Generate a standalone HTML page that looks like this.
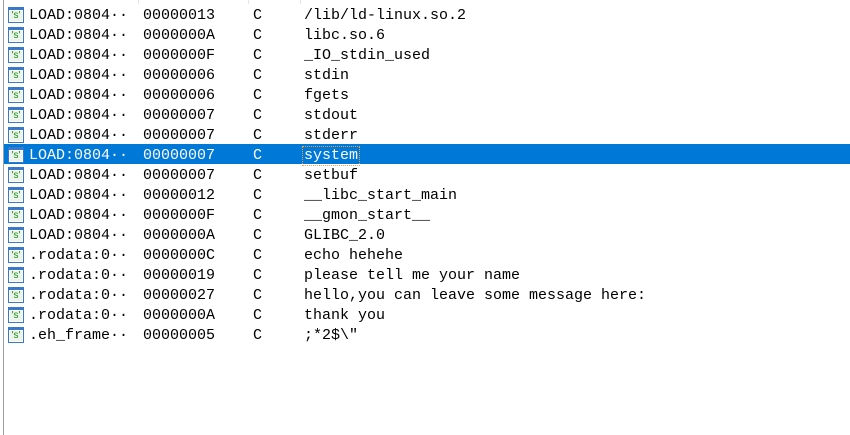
<!DOCTYPE html>
<html><head><style>
body{margin:0;width:850px;height:435px;background:#fff;overflow:hidden;position:relative;font-family:"Liberation Mono","Noto Sans CJK SC",monospace;font-size:15px;color:#000}
.lb{position:absolute;left:3px;top:0;width:1px;height:435px;background:#a0a0a0}
.sep{position:absolute;top:0;width:1px;height:4px;background:#e5e5e5}
.r{position:absolute;left:4px;width:846px;height:20px;line-height:20px}
.r span{position:absolute;top:2px;white-space:pre}
.sel{background:#0078d7;color:#fff}
.ic{position:absolute;left:4px;top:3px;width:14px;height:14px;border:1px solid #3a78c9;background:#fff}
.ic:before{content:"";position:absolute;left:0;top:0;right:0;height:2px;background:#3a78c9}
.ic i{position:absolute;left:1px;top:3px;width:12px;height:10px;background:#eaf4ea;color:#1f8a1f;font-style:normal;font-size:10px;line-height:10px;text-align:center;font-family:"Liberation Sans",sans-serif}
.f{outline:1px dotted #f0a040;outline-offset:-1px}
</style></head><body>
<div class="lb"></div>
<div class="sep" style="left:138px"></div><div class="sep" style="left:248px"></div><div class="sep" style="left:300px"></div>
<div class="r" style="top:4px"><div class="ic"><i>'s'</i></div><span style="left:25px">LOAD:0804··</span><span style="left:139px">00000013</span><span style="left:249px">C</span><span style="left:300px">/lib/ld-linux.so.2</span></div>
<div class="r" style="top:24px"><div class="ic"><i>'s'</i></div><span style="left:25px">LOAD:0804··</span><span style="left:139px">0000000A</span><span style="left:249px">C</span><span style="left:300px">libc.so.6</span></div>
<div class="r" style="top:44px"><div class="ic"><i>'s'</i></div><span style="left:25px">LOAD:0804··</span><span style="left:139px">0000000F</span><span style="left:249px">C</span><span style="left:300px">_IO_stdin_used</span></div>
<div class="r" style="top:64px"><div class="ic"><i>'s'</i></div><span style="left:25px">LOAD:0804··</span><span style="left:139px">00000006</span><span style="left:249px">C</span><span style="left:300px">stdin</span></div>
<div class="r" style="top:84px"><div class="ic"><i>'s'</i></div><span style="left:25px">LOAD:0804··</span><span style="left:139px">00000006</span><span style="left:249px">C</span><span style="left:300px">fgets</span></div>
<div class="r" style="top:104px"><div class="ic"><i>'s'</i></div><span style="left:25px">LOAD:0804··</span><span style="left:139px">00000007</span><span style="left:249px">C</span><span style="left:300px">stdout</span></div>
<div class="r" style="top:124px"><div class="ic"><i>'s'</i></div><span style="left:25px">LOAD:0804··</span><span style="left:139px">00000007</span><span style="left:249px">C</span><span style="left:300px">stderr</span></div>
<div class="r sel" style="top:144px"><div class="ic"><i>'s'</i></div><span style="left:25px">LOAD:0804··</span><span style="left:139px">00000007</span><span style="left:249px">C</span><span class="f" style="left:298px;padding:0 2px">system</span></div>
<div class="r" style="top:164px"><div class="ic"><i>'s'</i></div><span style="left:25px">LOAD:0804··</span><span style="left:139px">00000007</span><span style="left:249px">C</span><span style="left:300px">setbuf</span></div>
<div class="r" style="top:184px"><div class="ic"><i>'s'</i></div><span style="left:25px">LOAD:0804··</span><span style="left:139px">00000012</span><span style="left:249px">C</span><span style="left:300px">__libc_start_main</span></div>
<div class="r" style="top:204px"><div class="ic"><i>'s'</i></div><span style="left:25px">LOAD:0804··</span><span style="left:139px">0000000F</span><span style="left:249px">C</span><span style="left:300px">__gmon_start__</span></div>
<div class="r" style="top:224px"><div class="ic"><i>'s'</i></div><span style="left:25px">LOAD:0804··</span><span style="left:139px">0000000A</span><span style="left:249px">C</span><span style="left:300px">GLIBC_2.0</span></div>
<div class="r" style="top:244px"><div class="ic"><i>'s'</i></div><span style="left:25px">.rodata:0··</span><span style="left:139px">0000000C</span><span style="left:249px">C</span><span style="left:300px">echo hehehe</span></div>
<div class="r" style="top:264px"><div class="ic"><i>'s'</i></div><span style="left:25px">.rodata:0··</span><span style="left:139px">00000019</span><span style="left:249px">C</span><span style="left:300px">please tell me your name</span></div>
<div class="r" style="top:284px"><div class="ic"><i>'s'</i></div><span style="left:25px">.rodata:0··</span><span style="left:139px">00000027</span><span style="left:249px">C</span><span style="left:300px">hello,you can leave some message here:</span></div>
<div class="r" style="top:304px"><div class="ic"><i>'s'</i></div><span style="left:25px">.rodata:0··</span><span style="left:139px">0000000A</span><span style="left:249px">C</span><span style="left:300px">thank you</span></div>
<div class="r" style="top:324px"><div class="ic"><i>'s'</i></div><span style="left:25px">.eh_frame··</span><span style="left:139px">00000005</span><span style="left:249px">C</span><span style="left:300px">;*2$\″</span></div>
</body></html>
